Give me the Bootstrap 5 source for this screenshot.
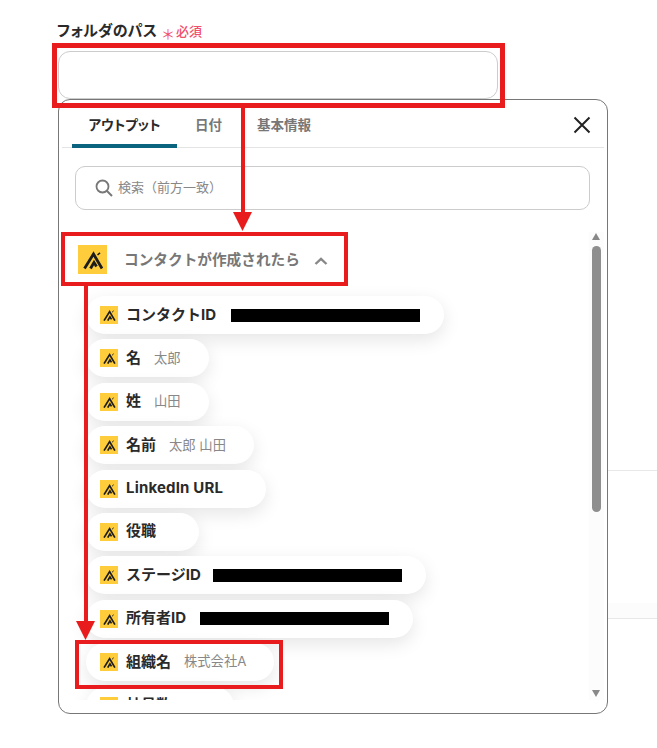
<!DOCTYPE html>
<html lang="ja">
<head>
<meta charset="utf-8">
<title>フォルダのパス</title>
<link href="https://cdn.jsdelivr.net/npm/bootstrap@5.3.0/dist/css/bootstrap.min.css" rel="stylesheet">
<style>
html,body{height:748px;overflow:hidden}
body{position:relative;background:#fff;font-family:Inter,"Noto Sans CJK JP","Liberation Sans",sans-serif;color:#2a2a2a;padding:19px 49px 0 58px}
.fld-label{font-size:15px;font-weight:700;line-height:24px;margin-left:-1px;height:32px}
.fld-name{font-feature-settings:"palt";letter-spacing:.2px}
.fld-req{color:#f0506e;font-size:13px;font-weight:500;margin-left:4px;line-height:25px}
.fld-star{font-size:14px;font-weight:400;color:#f0506e;width:11px;margin-left:4px;text-align:center;line-height:29px}
.fld-input{width:440px;height:48px;border:1px solid #ccc;border-radius:12px}
.pop{height:615px;border:1px solid #777;border-radius:12px;background:#fff;padding:0 3px;position:relative;z-index:1}
.tabs{height:48px;border-bottom:1px solid #e4e4e4}
.tabi{font-size:13.5px;font-weight:700;color:#777;line-height:51px;height:48px}
.tabi.on{color:#2a2a2a;width:105px;margin-left:10px;text-align:center;border-bottom:4px solid #0a6480;border-radius:4px 4px 0 0;font-feature-settings:"palt"}
.tabi.t2{margin-left:18px;width:27px}
.tabi.t3{margin-left:35px}
.xbtn{margin-left:auto;margin-right:13px;margin-top:3px}
.searchb{margin:18px 14px 0 13px;height:44px;border:1px solid #ccc;border-radius:10px;padding-left:19px;gap:5px;font-size:13px;color:#888}
.lst{height:468px;margin-top:22px;overflow:hidden;position:relative}
.grp{height:53px;padding:2px 0 0 16px;font-size:14.67px;font-weight:700;color:#777}
.grp .lab{margin-left:17px}
.grp .chev{margin-left:14px;margin-top:2px}
.rows{padding:11px 0 0 24px;gap:5.4px}
.pillr{height:38px;width:max-content;background:#fff;border-radius:19px;padding:0 28px 0 14px;box-shadow:0 6px 18px rgba(0,0,0,.1);font-size:15px;font-weight:700;line-height:1}
.pillr .ic{margin-right:8px;flex:none}
.pillr .txt{position:relative;top:-1px}
.pillr .val{font-size:13.3px;font-weight:400;color:#888;margin-left:13px}
.pillr .noval{width:15px}
.txt-wide{letter-spacing:.17px}
.redact{display:inline-block;width:189px;height:13px;background:#000;margin:0 -4px 0 13px}
.redact.tight{margin-left:12px}
.redact.loose{margin-left:14px}
.redact.wide{margin-left:15px}
.sbar{position:absolute;right:0;top:0;bottom:0;width:15px;background:#fcfcfc}
.sthumb{position:absolute;left:3px;top:14px;width:9px;height:266px;background:#8e8e8e;border-radius:5px}
.sup,.sdn{position:absolute;left:3px;width:0;height:0;border-left:4.5px solid transparent;border-right:4.5px solid transparent}
.sup{top:1px;border-bottom:7px solid #888}
.sdn{bottom:3px;border-top:7px solid #888}
.bgline{position:absolute;left:607px;right:0;height:1px;background:#e8e8e8}
.bgband{position:absolute;left:607px;right:0;top:603px;height:15px;background:#fcfcfc}
.notes{position:absolute;left:0;top:0;z-index:2;pointer-events:none}
</style>
</head>
<body>
<svg width="0" height="0" class="position-absolute">
<symbol id="logo" viewBox="0 0 29 29">
<rect width="29" height="29" fill="#ffcd3c"/>
<path d="M6.5 23.5 L15.5 9 L24 23.5 M12.5 23.5 L16 17.5 L18.5 21.5" fill="none" stroke="#1c1c1c" stroke-width="2.8"/>
<path d="M19.5 10 L22 7.8" fill="none" stroke="#1c1c1c" stroke-width="1.6"/>
</symbol>
</svg>

<div class="bgline" style="top:470px"></div>
<div class="bgband"></div>
<div class="bgline" style="top:618px"></div>

<div class="fld-label d-flex align-items-start">
<span class="fld-name">フォルダのパス</span><span class="fld-star">＊</span><span class="fld-req">必須</span>
</div>
<div class="fld-input"></div>

<div class="pop">
<div class="tabs d-flex">
<div class="tabi on">アウトプット</div>
<div class="tabi t2">日付</div>
<div class="tabi t3">基本情報</div>
<svg class="xbtn align-self-center" width="18" height="18" viewBox="0 0 18 18"><path d="M1.5 1.5 L16.5 16.5 M16.5 1.5 L1.5 16.5" stroke="#222" stroke-width="2" fill="none"/></svg>
</div>
<div class="searchb d-flex align-items-center">
<svg width="18" height="18" viewBox="0 0 18 18"><circle cx="7.5" cy="7.5" r="6" fill="none" stroke="#777" stroke-width="1.8"/><path d="M12 12 L17 17" stroke="#777" stroke-width="2"/></svg>
<span>検索（前方一致）</span>
</div>
<div class="lst">
<div class="grp d-flex align-items-center">
<svg width="29" height="29"><use href="#logo"/></svg>
<span class="lab">コンタクトが作成されたら</span>
<svg class="chev" width="14" height="8" viewBox="0 0 14 8"><path d="M1.5 7 L7 1.8 L12.5 7" fill="none" stroke="#888" stroke-width="2.4"/></svg>
</div>
<div class="rows d-flex flex-column">
<div class="pillr d-flex align-items-center"><svg class="ic" width="18" height="18"><use href="#logo"/></svg><span class="txt">コンタクトID</span><span class="redact wide"></span></div>
<div class="pillr d-flex align-items-center"><svg class="ic" width="18" height="18"><use href="#logo"/></svg><span class="txt">名</span><span class="val">太郎</span></div>
<div class="pillr d-flex align-items-center"><svg class="ic" width="18" height="18"><use href="#logo"/></svg><span class="txt">姓</span><span class="val">山田</span></div>
<div class="pillr d-flex align-items-center"><svg class="ic" width="18" height="18"><use href="#logo"/></svg><span class="txt">名前</span><span class="val">太郎 山田</span></div>
<div class="pillr d-flex align-items-center"><svg class="ic" width="18" height="18"><use href="#logo"/></svg><span class="txt txt-wide">LinkedIn URL</span><span class="noval"></span></div>
<div class="pillr d-flex align-items-center"><svg class="ic" width="18" height="18"><use href="#logo"/></svg><span class="txt">役職</span><span class="noval"></span></div>
<div class="pillr d-flex align-items-center"><svg class="ic" width="18" height="18"><use href="#logo"/></svg><span class="txt">ステージID</span><span class="redact tight"></span></div>
<div class="pillr d-flex align-items-center"><svg class="ic" width="18" height="18"><use href="#logo"/></svg><span class="txt">所有者ID</span><span class="redact loose"></span></div>
<div class="pillr d-flex align-items-center"><svg class="ic" width="18" height="18"><use href="#logo"/></svg><span class="txt">組織名</span><span class="val">株式会社A</span></div>
<div class="pillr d-flex align-items-center"><svg class="ic" width="18" height="18"><use href="#logo"/></svg><span class="txt">社員数</span><span class="val">100</span></div>
</div>
<div class="sbar"><span class="sup"></span><span class="sthumb"></span><span class="sdn"></span></div>
</div>
</div>

<svg class="notes" width="657" height="748" viewBox="0 0 657 748">
<g fill="none" stroke="#e81c1c">
<rect x="54.5" y="45.5" width="448" height="60" stroke-width="5"/>
<rect x="63" y="234" width="283" height="50" stroke-width="4"/>
<rect x="77" y="642" width="204" height="45" stroke-width="4"/>
<path d="M243 108 V214 M86 286 V624" stroke-width="4"/>
</g>
<path d="M233 212 H252 L242.5 231 Z M76 621 H95 L85.5 640 Z" fill="#e81c1c"/>
</svg>
</body>
</html>
